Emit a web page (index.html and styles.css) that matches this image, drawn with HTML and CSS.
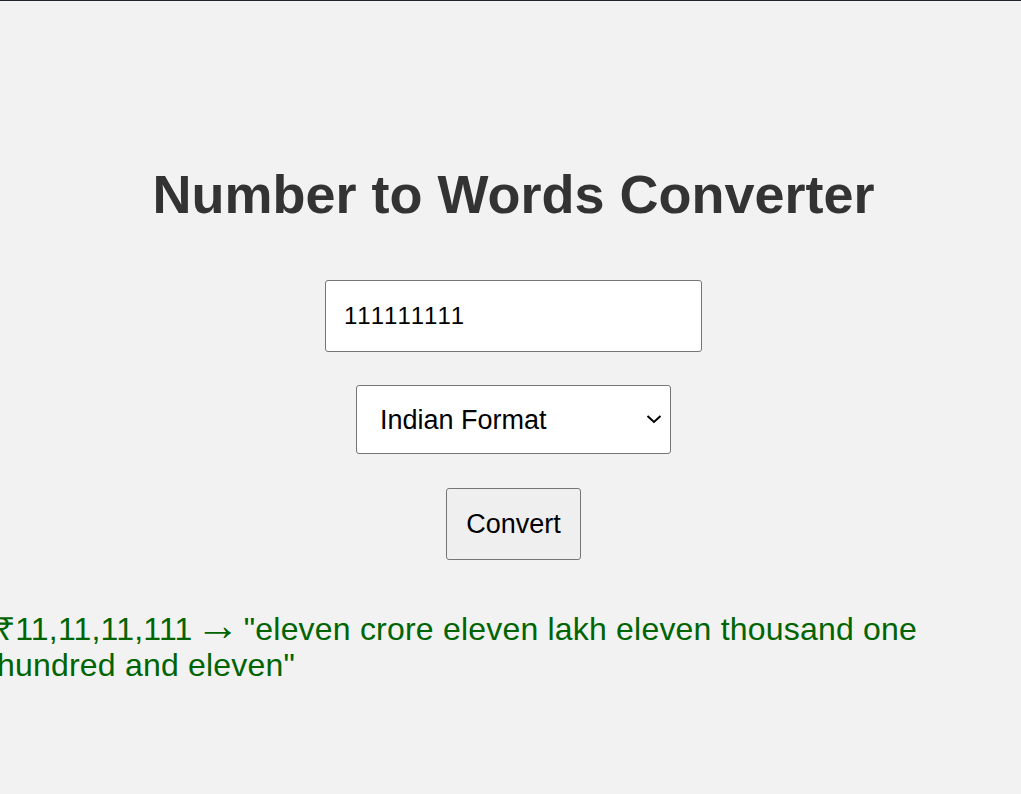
FILE: index.html
```html
<!DOCTYPE html>
<html lang="en">
<head>
<meta charset="utf-8">
<title>Number to Words Converter</title>
<link rel="stylesheet" href="styles.css">
</head>
<body>
<div class="page">
  <h1 class="title">Number to Words Converter</h1>
  <input class="num-input" type="text" value="111111111">
  <div class="select-wrap">
    <select class="format-select">
      <option>Indian Format</option>
      <option>International Format</option>
    </select>
    <svg class="select-chevron" width="16" height="10" viewBox="0 0 16 10" aria-hidden="true"><path d="M1.5 2 L8 8 L14.5 2" fill="none" stroke="#000" stroke-width="2"/></svg>
  </div>
  <button class="convert-btn" type="button">Convert</button>
  <div class="result">₹11,11,11,111 <span class="arrow">→</span> "eleven crore eleven lakh eleven thousand one hundred and eleven"</div>
</div>
</body>
</html>
```

FILE: styles.css
```css
html, body {
  margin: 0;
  padding: 0;
}
body {
  background: #f2f2f2;
  border-top: 1px solid #1f2330;
  font-family: "Liberation Sans", Arial, sans-serif;
  overflow: hidden;
  height: 793px;
}
.page {
  display: flex;
  flex-direction: column;
  align-items: center;
  padding: 162px 0 0 6px;
}
.title {
  margin: 0;
  font-size: 54px;
  line-height: 62px;
  font-weight: bold;
  color: #333333;
}
.num-input {
  box-sizing: border-box;
  margin-top: 55px;
  width: 377px;
  height: 72px;
  padding: 0 18px;
  font-family: "Liberation Sans", Arial, sans-serif;
  font-kerning: none;
  font-size: 24px;
  color: #000;
  background: #fff;
  border: 1px solid #767676;
  border-radius: 3px;
}
.select-wrap {
  position: relative;
  margin-top: 33px;
  width: 315px;
  height: 69px;
}
.format-select {
  box-sizing: border-box;
  -webkit-appearance: none;
  appearance: none;
  width: 315px;
  height: 69px;
  padding: 0 40px 0 23px;
  font-family: "Liberation Sans", Arial, sans-serif;
  font-kerning: none;
  font-size: 27px;
  color: #000;
  background-color: #fff;
  border: 1px solid #767676;
  border-radius: 3px;
}
.select-chevron {
  position: absolute;
  right: 9px;
  top: 29px;
  pointer-events: none;
}
.convert-btn {
  box-sizing: border-box;
  margin-top: 34px;
  width: 135px;
  height: 72px;
  padding: 0;
  font-family: "Liberation Sans", Arial, sans-serif;
  font-kerning: none;
  font-size: 27px;
  color: #000;
  background: #efefef;
  border: 1px solid #767676;
  border-radius: 3px;
}
.result {
  align-self: flex-start;
  margin: 51px 0 0 -9px;
  width: 1030px;
  text-align: left;
  font-size: 32px;
  line-height: 36px;
  letter-spacing: 0.2px;
  color: #006400;
}
.arrow {
  font-size: 44px;
  line-height: 0;
  letter-spacing: 0;
  margin: 0 -5px 0 -6px;
}
```
